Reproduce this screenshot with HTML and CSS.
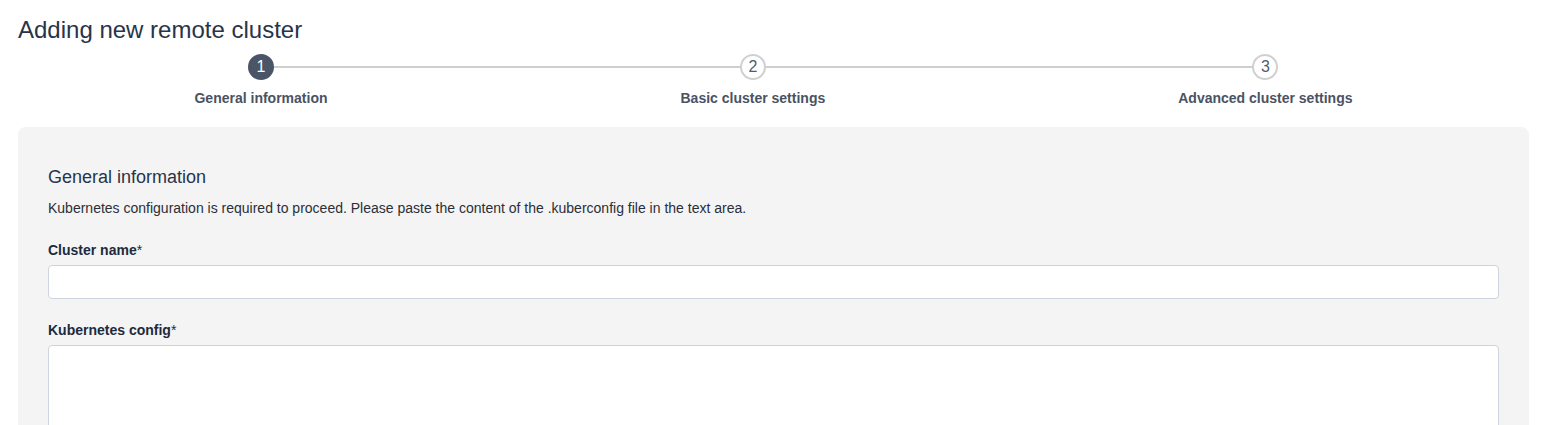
FILE: index.html
```html
<!DOCTYPE html>
<html lang="en">
<head>
<meta charset="utf-8">
<title>Adding new remote cluster</title>
<link rel="stylesheet" href="styles.css">
</head>
<body>
<div class="page">
  <h1 class="page-title">Adding new remote cluster</h1>
  <div class="stepper">
    <div class="stepper-line"></div>
    <div class="step step-active">
      <div class="step-circle">1</div>
      <div class="step-label">General information</div>
    </div>
    <div class="step">
      <div class="step-circle">2</div>
      <div class="step-label">Basic cluster settings</div>
    </div>
    <div class="step">
      <div class="step-circle">3</div>
      <div class="step-label">Advanced cluster settings</div>
    </div>
  </div>
  <div class="panel">
    <h2 class="panel-title">General information</h2>
    <p class="panel-desc">Kubernetes configuration is required to proceed. Please paste the content of the .kuberconfig file in the text area.</p>
    <div class="field">
      <label class="field-label" for="cluster-name">Cluster name<span class="req">*</span></label>
      <input class="field-input" id="cluster-name" type="text">
    </div>
    <div class="field field-config">
      <label class="field-label" for="kube-config">Kubernetes config<span class="req">*</span></label>
      <textarea class="field-textarea" id="kube-config"></textarea>
    </div>
  </div>
</div>
</body>
</html>
```
FILE: styles.css
```css
html, body {
  margin: 0;
  padding: 0;
  background: #ffffff;
  font-family: "Liberation Sans", Arial, sans-serif;
  color: #222b3a;
}

.page {
  padding: 16px 16px 0 18px;
}

.page-title {
  margin: 0;
  font-size: 24px;
  line-height: 28px;
  font-weight: 400;
  color: #28344a;
}

.stepper {
  position: relative;
  display: flex;
  justify-content: space-around;
  margin-top: 10px;
}

.stepper-line {
  position: absolute;
  left: 243px;
  right: 264px;
  top: 12px;
  height: 2px;
  background: #cfcfcf;
}

.step {
  position: relative;
  display: flex;
  flex-direction: column;
  align-items: center;
}

.step-circle {
  box-sizing: border-box;
  width: 26px;
  height: 26px;
  border-radius: 50%;
  border: 2px solid #d0d0d0;
  background: #ffffff;
  color: #555c68;
  font-size: 16px;
  line-height: 22px;
  text-align: center;
}

.step-active .step-circle {
  border-color: #4a5568;
  background: #4a5568;
  color: #ffffff;
}

.step-label {
  margin-top: 10px;
  font-size: 14px;
  line-height: 16px;
  font-weight: 700;
  color: #4a5263;
  white-space: nowrap;
}

.panel {
  margin-top: 21px;
  background: #f4f4f4;
  border-radius: 8px 8px 0 0;
  padding: 39px 30px 40px 30px;
}

.panel-title {
  margin: 0;
  font-size: 18px;
  line-height: 22px;
  font-weight: 400;
  color: #28344a;
}

.panel-desc {
  margin: 12px 0 0 0;
  font-size: 14px;
  line-height: 16px;
  color: #2a2f38;
}

.field {
  display: flex;
  flex-direction: column;
  margin-top: 26px;
}

.field-config {
  margin-top: 23px;
}

.field-label {
  font-size: 14px;
  line-height: 16px;
  font-weight: 700;
  color: #1f2a3c;
  margin-bottom: 7px;
}

.req {
  font-weight: 400;
}

.field-input,
.field-textarea {
  box-sizing: border-box;
  width: 100%;
  margin: 0;
  border: 1px solid #cdd4df;
  border-radius: 4px;
  background: #ffffff;
  font-family: inherit;
  font-size: 14px;
  outline: none;
}

.field-input {
  height: 34px;
  padding: 0 10px;
}

.field-textarea {
  height: 150px;
  padding: 8px 10px;
  resize: none;
  display: block;
}
```
